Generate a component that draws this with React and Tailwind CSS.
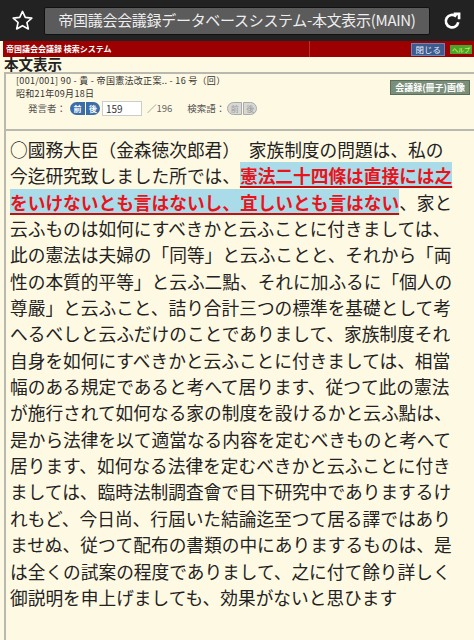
import React from "react";

const lines = [
  "○國務大臣（金森徳次郎君）　家族制度の問題は、私の",
  null,
  null,
  "云ふものは如何にすべきかと云ふことに付きましては、",
  "此の憲法は夫婦の「同等」と云ふことと、それから「両",
  "性の本質的平等」と云ふ二點、それに加ふるに「個人の",
  "尊嚴」と云ふこと、詰り合計三つの標準を基礎として考",
  "へるべしと云ふだけのことでありまして、家族制度それ",
  "自身を如何にすべきかと云ふことに付きましては、相當",
  "幅のある規定であると考へて居ります、従つて此の憲法",
  "が施行されて如何なる家の制度を設けるかと云ふ點は、",
  "是から法律を以て適當なる内容を定むべきものと考へて",
  "居ります、如何なる法律を定むべきかと云ふことに付き",
  "ましては、臨時法制調査會で目下研究中でありまするけ",
  "れもど、今日尚、行屆いた結論迄至つて居る譯ではあり",
  "ませぬ、従つて配布の書類の中にありまするものは、是",
  "は全くの試案の程度でありまして、之に付て餘り詳しく",
  "御説明を申上げましても、効果がないと思ひます",
];

const hl =
  "bg-[#a9dbe9] text-[#e8141c] font-bold underline decoration-[#c01010] decoration-2 underline-offset-[3px]";

function Star() {
  return (
    <svg width="23" height="23" viewBox="0 0 24 24" fill="none" stroke="white" strokeWidth="1.7" strokeLinejoin="round">
      <path d="M12 2.5l2.9 6.3 6.8.7-5.1 4.6 1.5 6.7L12 17.4l-6.1 3.4 1.5-6.7-5.1-4.6 6.8-.7z" />
    </svg>
  );
}

function Reload() {
  return (
    <svg width="20" height="20" viewBox="0 0 24 24" fill="none" stroke="white" strokeWidth="3.2" strokeLinecap="butt">
      <path d="M19.5 13.5A7.5 7.5 0 1 1 17 6.5" />
      <path d="M14 3.5h6.5V10" fill="none" strokeLinejoin="miter" />
    </svg>
  );
}

export default function App() {
  return (
    <div
      className="w-[474px] h-[640px] overflow-hidden bg-[#fef9e3] text-[#222]"
      style={{ fontFamily: '"Noto Sans CJK JP", "Noto Sans", sans-serif' }}
    >
      {/* browser bar */}
      <div className="h-[41px] bg-[#222] flex items-center">
        <div className="w-[44px] flex justify-center">
          <Star />
        </div>
        <div className="w-[386px] h-[28px] bg-[#5b5b5b] border border-[#111] rounded-[2px] flex items-center justify-center text-[15px] text-[#eee] tracking-[-0.3px]">
          帝国議会会議録データベースシステム-本文表示(MAIN)
        </div>
        <div className="flex-1 flex justify-center">
          <Reload />
        </div>
      </div>

      {/* red bar */}
      <div className="h-[16px] ml-[3px] bg-[#9c0000] flex items-center">
        <div className="w-[307px] h-full border-r border-[#b53030] flex items-center pl-[3px] text-[8px] font-bold text-white">
          帝国議会会議録 検索システム
        </div>
        <div className="flex-1 flex items-center justify-end gap-[5px] pr-[2px]">
          <span className="h-[13px] px-[3px] bg-[#3c5b8f] border border-[#6a86b5] text-[8.5px] leading-[11px] text-[#e8eef8]">閉じる</span>
          <span className="h-[9px] px-[2px] bg-[#4aa52a] text-[6px] leading-[9px] text-[#e8ff6a]">ヘルプ</span>
        </div>
      </div>

      <div className="h-[15px] pl-[4px] flex items-center text-[14.5px] font-bold leading-none">本文表示</div>

      {/* info + body */}
      <div className="ml-[4px] border-l-2 border-t-2 border-[#b9b9b0] h-[568px]">
        <div className="h-[57px] border-b-2 border-[#b9b9b0] flex justify-between">
          <div className="pl-[10px] text-[9px] leading-[13px] tracking-[0.3px] text-[#333]">
            <div>[001/001] 90 - 貴 - 帝国憲法改正案.. - 16 号（回）</div>
            <div>昭和21年09月18日</div>
            <div className="flex items-center mt-[1px] ml-[12px] text-[9.5px] tracking-normal">
              <span className="text-[#555]">発言者：</span>
              <span className="ml-[4px] flex">
                <span className="w-[15px] h-[13px] rounded-l-full bg-[#3b6ea8] text-white text-[8px] font-bold flex items-center justify-center">前</span>
                <span className="ml-px w-[14px] h-[13px] rounded-r-full bg-[#3b6ea8] text-white text-[8px] font-bold flex items-center justify-center">後</span>
              </span>
              <span className="ml-[2px] w-[40px] h-[15px] bg-white border border-[#ccc] pl-[3px] text-[10px] leading-[13px]">159</span>
              <span className="ml-[5px] text-[#666]">／196</span>
              <span className="ml-[15px] text-[#555]">検索語：</span>
              <span className="ml-[2px] flex">
                <span className="w-[15px] h-[13px] rounded-l-full bg-[#d8d8d4] border border-[#aaa] text-[#999] text-[8px] flex items-center justify-center">前</span>
                <span className="ml-px w-[14px] h-[13px] rounded-r-full bg-[#d8d8d4] border border-[#aaa] text-[#999] text-[8px] flex items-center justify-center">後</span>
              </span>
            </div>
          </div>
          <div className="pt-[6px] pr-[4px]">
            <span className="block h-[15px] px-[4px] bg-[#7a8f7a] border border-[#5b6e5b] text-[9px] leading-[13px] font-bold text-white">
              会議録(冊子)画像
            </span>
          </div>
        </div>

        <div className="pl-[4px] pt-[5px] text-[17.7px] leading-[26.35px] whitespace-nowrap">
          {lines.map((l, i) => {
            if (i === 1)
              return (
                <div key={i}>
                  今迄研究致しました所では、<span className={hl}>憲法二十四條は直接には之</span>
                </div>
              );
            if (i === 2)
              return (
                <div key={i}>
                  <span className={hl}>をいけないとも言はないし、宜しいとも言はない</span>、家と
                </div>
              );
            return <div key={i}>{l}</div>;
          })}
        </div>
      </div>
    </div>
  );
}
